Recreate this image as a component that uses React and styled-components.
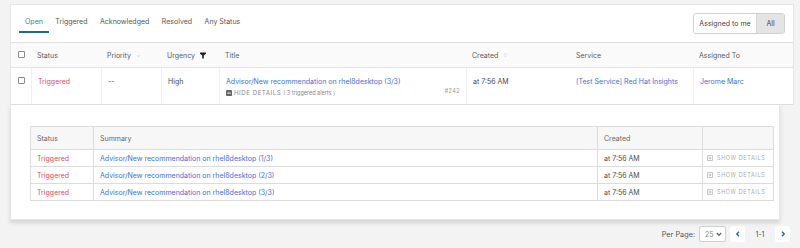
import React from "react";
import styled, { createGlobalStyle } from "styled-components";

const Global = createGlobalStyle`
  html, body { margin: 0; padding: 0; background: #f3f3f3; }
  body { font-family: "Inter", "Liberation Sans", sans-serif; font-size: 7px; color: #4a4a4a; }
  * { box-sizing: border-box; }
`;

const Page = styled.div`
  width: 800px;
  height: 248px;
  padding: 4px 0 0 10px;
  display: flex;
  flex-direction: column;
`;

const TopPanel = styled.div`
  width: 784px;
  background: #fff;
  border: 1px solid #e6e6e6;
  border-bottom: none;
`;

const TabBar = styled.div`
  height: 38px;
  display: flex;
  align-items: flex-start;
  justify-content: space-between;
  padding: 8px 8px 0 8px;
  border-bottom: 1px solid #e2e2e2;
`;

const Tabs = styled.div`
  display: flex;
  align-items: center;
  margin-top: 3px;
`;

const Tab = styled.div`
  position: relative;
  padding: 0 6px;
  margin-right: 0.5px;
  color: ${(p) => (p.$active ? "#2d7fa3" : "#555")};
  line-height: 12px;
  white-space: nowrap;
  &::after {
    content: "";
    display: ${(p) => (p.$active ? "block" : "none")};
    position: absolute;
    left: 0;
    right: 0;
    bottom: -5px;
    height: 2px;
    background: #1f6b8a;
  }
`;

const Toggle = styled.div`
  display: flex;
  height: 21px;
  border: 1px solid #cfcfcf;
  border-radius: 3px;
  overflow: hidden;
`;

const ToggleBtn = styled.div`
  display: flex;
  align-items: center;
  justify-content: center;
  width: ${(p) => p.$w}px;
  background: ${(p) => (p.$on ? "#e4e4e4" : "#fff")};
  border-left: ${(p) => (p.$on ? "1px solid #d6d6d6" : "none")};
  color: #444;
`;

const cols = "20px 70px 60px 58px 247px 104px 123px 1fr";

const HeadRow = styled.div`
  display: grid;
  grid-template-columns: ${cols};
  height: 25px;
  background: #fafafa;
  border-bottom: 1px solid #e2e2e2;
  color: #5a5a5a;
`;

const BodyRow = styled.div`
  display: grid;
  grid-template-columns: ${cols};
  height: 37px;
  background: #fff;
  border-bottom: 1px solid #dedede;
`;

const Cell = styled.div`
  position: relative;
  display: flex;
  flex-direction: column;
  justify-content: ${(p) => (p.$head ? "center" : "flex-start")};
  padding: ${(p) => (p.$head ? "0 6px" : "9px 6px 0")};
  border-left: ${(p) => (p.$line ? "1px solid #f0f0f0" : "none")};
  color: ${(p) => p.$color || "inherit"};
  white-space: nowrap;
`;

const CheckCell = styled.div`
  display: flex;
  justify-content: center;
  padding-top: ${(p) => (p.$head ? "8px" : "9px")};
  padding-left: 1px;
`;

const Box = styled.div`
  width: 7px;
  height: 7px;
  border: 1px solid #8a8a8a;
  border-radius: 1px;
  background: #fff;
`;

const HeadLabel = styled.span`
  display: inline-flex;
  align-items: center;
  gap: 5px;
`;

const Link = styled.span`
  color: #3f70d2;
`;

const Sub = styled.div`
  margin-top: 3px;
  display: flex;
  align-items: center;
  gap: 2px;
  color: #888;
  font-size: 6px;
`;

const Caps = styled.span`
  letter-spacing: 0.5px;
  font-size: 6.2px;
`;

const Small = styled.span`
  font-size: 5.5px;
  color: #888;
`;

const Num = styled.span`
  position: absolute;
  right: 6px;
  top: 20px;
  font-size: 5.5px;
  color: #999;
  letter-spacing: 0.4px;
`;

const DetailPanel = styled.div`
  width: 770px;
  background: #fff;
  border: 1px solid #e6e6e6;
  border-top: none;
  box-shadow: 0 3px 4px rgba(0, 0, 0, 0.12);
  padding: 21px 5px 18px 19px;
`;

const subCols = "62px 504px 105px 1fr";

const SubTable = styled.div`
  width: 744px;
  border: 1px solid #dcdcdc;
`;

const SubHead = styled.div`
  display: grid;
  grid-template-columns: ${subCols};
  height: 23px;
  background: #f7f7f7;
  border-bottom: 1px solid #dcdcdc;
  color: #666;
`;

const SubRow = styled.div`
  display: grid;
  grid-template-columns: ${subCols};
  height: ${(p) => (p.$last ? 16 : 17)}px;
  border-bottom: ${(p) => (p.$last ? "none" : "1px solid #dcdcdc")};
`;

const SubCell = styled.div`
  display: flex;
  align-items: center;
  padding: 0 ${(p) => p.$pl || 6}px;
  border-left: ${(p) => (p.$first ? "none" : "1px solid #dcdcdc")};
  color: ${(p) => p.$color || "inherit"};
  white-space: nowrap;
`;

const ShowDetails = styled.span`
  color: #aaa;
  font-size: 5.5px;
  letter-spacing: 0.6px;
  display: inline-flex;
  align-items: center;
  gap: 4px;
  white-space: nowrap;
`;

const Footer = styled.div`
  width: 780px;
  display: flex;
  justify-content: flex-end;
  align-items: center;
  margin-top: 6px;
  height: 16px;
  color: #555;
`;

const Label = styled.span`
  margin-right: 4px;
  font-size: 7.3px;
`;

const Select = styled.div`
  width: 27px;
  height: 16px;
  border: 1px solid #cfcfcf;
  border-radius: 2px;
  background: #fff;
  display: flex;
  align-items: center;
  justify-content: space-between;
  padding: 0 3px 0 5px;
  color: #888;
  margin-right: 4px;
`;

const PageBtn = styled.div`
  width: 15px;
  height: 16px;
  background: #fff;
  display: flex;
  align-items: center;
  justify-content: center;
  border-radius: 2px;
`;

const Range = styled.span`
  width: 30px;
  text-align: center;
  color: #555;
`;

const RED = "#e24a62";

const PlusBox = ({ minus }) => (
  <svg width="6" height="6" viewBox="0 0 6 6">
    {minus ? (
      <>
        <rect x="0" y="0" width="6" height="6" rx="0.8" fill="#666" />
        <rect x="1.2" y="2.6" width="3.6" height="0.9" fill="#fff" />
      </>
    ) : (
      <>
        <rect x="0.4" y="0.4" width="5.2" height="5.2" rx="0.6" fill="none" stroke="#aaa" strokeWidth="0.7" />
        <path d="M3 1.5V4.5M1.5 3H4.5" stroke="#aaa" strokeWidth="0.7" />
      </>
    )}
  </svg>
);

const Chevron = ({ dir, color }) => (
  <svg width="6" height="6" viewBox="0 0 6 6">
    <path
      d={dir === "left" ? "M4 0.8L1.8 3L4 5.2" : dir === "right" ? "M2 0.8L4.2 3L2 5.2" : "M0.8 2L3 4.2L5.2 2"}
      fill="none"
      stroke={color}
      strokeWidth="1.4"
    />
  </svg>
);

const Funnel = () => (
  <svg width="6" height="7" viewBox="0 0 6 7">
    <path d="M0 0.5H6V1.8L3.8 3.6V6.5H2.2V3.6L0 1.8Z" fill="#222" />
  </svg>
);

const SortDown = () => (
  <svg width="5" height="5" viewBox="0 0 5 5">
    <path d="M1.5 2.5L2.5 3.5L3.5 2.5" fill="none" stroke="#aaa" strokeWidth="0.6" />
  </svg>
);

const SortBoth = () => (
  <svg width="5" height="6" viewBox="0 0 5 6">
    <path d="M1.5 2.4L2.5 1.4L3.5 2.4M1.5 3.6L2.5 4.6L3.5 3.6" fill="none" stroke="#bbb" strokeWidth="0.6" />
  </svg>
);

const alerts = [1, 2, 3];

export default function App() {
  return (
    <>
      <Global />
      <Page>
        <TopPanel>
          <TabBar>
            <Tabs>
              <Tab $active>Open</Tab>
              <Tab>Triggered</Tab>
              <Tab>Acknowledged</Tab>
              <Tab>Resolved</Tab>
              <Tab>Any Status</Tab>
            </Tabs>
            <Toggle>
              <ToggleBtn $w={62}>Assigned to me</ToggleBtn>
              <ToggleBtn $w={28} $on>All</ToggleBtn>
            </Toggle>
          </TabBar>
          <HeadRow>
            <CheckCell $head><Box /></CheckCell>
            <Cell $head>Status</Cell>
            <Cell $head><HeadLabel>Priority <SortDown /></HeadLabel></Cell>
            <Cell $head><HeadLabel>Urgency <Funnel /></HeadLabel></Cell>
            <Cell $head>Title</Cell>
            <Cell $head><HeadLabel>Created <SortBoth /></HeadLabel></Cell>
            <Cell $head>Service</Cell>
            <Cell $head>Assigned To</Cell>
          </HeadRow>
          <BodyRow>
            <CheckCell><Box /></CheckCell>
            <Cell $line $color={RED}>Triggered</Cell>
            <Cell $line>--</Cell>
            <Cell $line>High</Cell>
            <Cell $line>
              <Link>Advisor/New recommendation on rhel8desktop (3/3)</Link>
              <Sub>
                <PlusBox minus />
                <Caps>HIDE DETAILS</Caps>
                <Small>( 3 triggered alerts )</Small>
              </Sub>
              <Num>#242</Num>
            </Cell>
            <Cell $line>at 7:56 AM</Cell>
            <Cell><Link>[Test Service] Red Hat Insights</Link></Cell>
            <Cell $line><Link>Jerome Marc</Link></Cell>
          </BodyRow>
        </TopPanel>
        <DetailPanel>
          <SubTable>
            <SubHead>
              <SubCell $first>Status</SubCell>
              <SubCell>Summary</SubCell>
              <SubCell>Created</SubCell>
              <SubCell />
            </SubHead>
            {alerts.map((n, i) => (
              <SubRow key={n} $last={i === alerts.length - 1}>
                <SubCell $first $color={RED}>Triggered</SubCell>
                <SubCell><Link>Advisor/New recommendation on rhel8desktop ({n}/3)</Link></SubCell>
                <SubCell>at 7:56 AM</SubCell>
                <SubCell $pl={4}>
                  <ShowDetails><PlusBox />SHOW DETAILS</ShowDetails>
                </SubCell>
              </SubRow>
            ))}
          </SubTable>
        </DetailPanel>
        <Footer>
          <Label>Per Page:</Label>
          <Select>25 <Chevron dir="down" color="#666" /></Select>
          <PageBtn><Chevron dir="left" color="#2b5fc4" /></PageBtn>
          <Range>1-1</Range>
          <PageBtn><Chevron dir="right" color="#2b5fc4" /></PageBtn>
        </Footer>
      </Page>
    </>
  );
}
